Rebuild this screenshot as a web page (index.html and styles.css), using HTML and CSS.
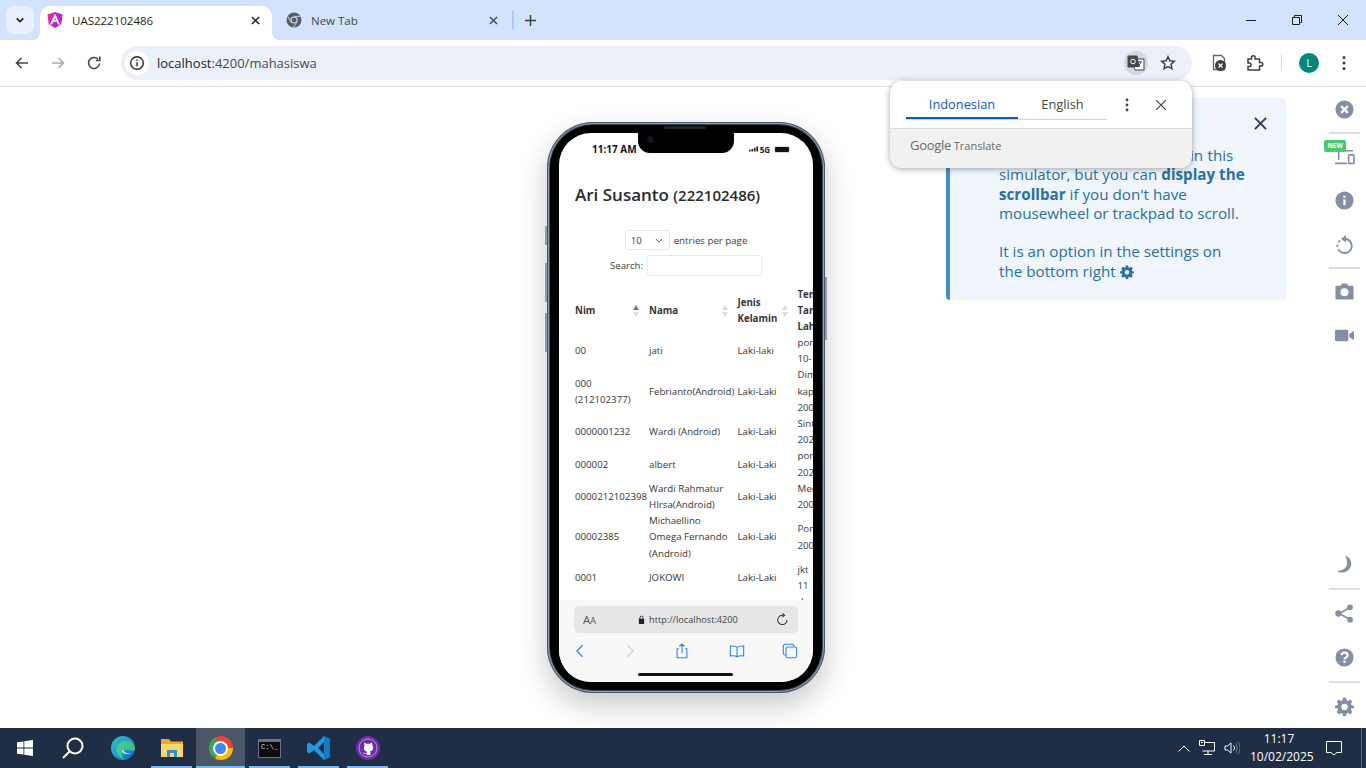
FILE: index.html
```html
<!DOCTYPE html>
<html lang="en">

<head>
    <meta charset="UTF-8">
    <title>UAS222102486</title>
    <link rel="stylesheet" href="styles.css">
</head>

<body>
    <!-- tab strip -->
    <div class="tabstrip">
        <div class="tab-search">
            <svg class="ico12" viewBox="0 0 12 12" fill="none" stroke="#1f1f1f" stroke-width="2"><path d="M2 4l4 4 4-4"/></svg>
        </div>
        <div class="tab tab-active">
            <svg class="favicon" viewBox="0 0 16 16">
                <defs><linearGradient id="ng" x1="0" y1="0" x2="1" y2="0.4"><stop offset="0" stop-color="#ff2a7a"/><stop offset="1" stop-color="#a31ff0"/></linearGradient></defs>
                <path d="M8 0l7.500 2.600-1.200 9.600L8 16l-6.300-3.800L.5 2.600z" fill="url(#ng)"/>
                <path d="M8 1.500L13 12.500h-2L9.800 9.800H6.200L5 12.500H3zM7 8.200h2L8 5.800z" fill="#fff"/>
            </svg>
            <span class="tab-title">UAS222102486</span>
            <svg class="tab-x" viewBox="0 0 10 10" stroke="#1f1f1f" stroke-width="1.600"><path d="M1 1l8 8M9 1l-8 8"/></svg>
        </div>
        <div class="tab tab-idle">
            <svg class="favicon" viewBox="0 0 16 16">
                <circle cx="8" cy="8" r="7.500" fill="#5a5e63"/>
                <circle cx="8" cy="8" r="3.600" fill="#d3e3fd"/>
                <circle cx="8" cy="8" r="2.500" fill="#5a5e63"/>
                <path d="M8 4.400h6.600M5 10L1.800 4.400M10.800 10l-3.200 5.400" stroke="#d3e3fd" stroke-width=".8"/>
            </svg>
            <span class="tab-title tab-title-off">New Tab</span>
            <svg class="tab-x" viewBox="0 0 10 10" stroke="#45474a" stroke-width="1.500"><path d="M1 1l8 8M9 1l-8 8"/></svg>
        </div>
        <div class="tab-sep"></div>
        <svg class="tab-plus" viewBox="0 0 12 12" stroke="#3c4043" stroke-width="1.600"><path d="M6 0v12M0 6h12"/></svg>
        <div class="win-controls">
            <svg class="win-btn" viewBox="0 0 12 12" stroke="#1f1f1f" fill="none"><path d="M1 6.500h10"/></svg>
            <svg class="win-btn" viewBox="0 0 12 12" stroke="#1f1f1f" fill="none"><path d="M1.500 3.500h7v7h-7zM3.500 3.500v-2h7v7h-2"/></svg>
            <svg class="win-btn" viewBox="0 0 12 12" stroke="#1f1f1f" fill="none"><path d="M1 1l10 10M11 1L1 11"/></svg>
        </div>
    </div>

    <!-- toolbar -->
    <div class="toolbar">
        <div class="nav-btns">
            <svg class="ico16" viewBox="0 0 16 16" fill="none" stroke="#474747" stroke-width="1.600"><path d="M14 8H2.500M7.500 3l-5 5 5 5"/></svg>
            <svg class="ico16" viewBox="0 0 16 16" fill="none" stroke="#a9abad" stroke-width="1.600"><path d="M2 8h11.500M8.500 3l5 5-5 5"/></svg>
            <svg class="ico16" viewBox="0 0 16 16" fill="none" stroke="#474747" stroke-width="1.600"><path d="M13.500 8.500A5.500 5.500 0 1 1 12 4.200"/><path d="M13.800 1.500v4h-4"/></svg>
        </div>
        <div class="omnibox">
            <div class="omni-info">
                <svg class="ico16" viewBox="0 0 16 16" fill="none" stroke="#2b2b2b" stroke-width="1.400"><circle cx="8" cy="8" r="6.300"/><path d="M8 7.200v4M8 4.500v1.400"/></svg>
            </div>
            <span class="url"><b>localhost</b>:4200/mahasiswa</span>
            <div class="omni-translate">
                <svg class="ico18" viewBox="0 0 18 18">
                    <path d="M1 2h9l1 3h6v11H8l-1-3H1z" fill="#fff" stroke="#474747"/>
                    <path d="M1 2h9l3 11H1z" fill="#474747"/>
                    <circle cx="6" cy="7.500" r="2.300" fill="none" stroke="#fff" stroke-width="1"/>
                    <path d="M11 8h4M13 7v1M14 8.500l-3 4" stroke="#474747" fill="none"/>
                </svg>
            </div>
            <svg class="omni-star" viewBox="0 0 16 16" fill="none" stroke="#3c4043" stroke-width="1.500"><path d="M8 1.800l1.900 4 4.400.5-3.200 3 .8 4.400L8 11.600l-3.900 2.100.8-4.400-3.200-3 4.400-.5z"/></svg>
        </div>
        <div class="ext-btns">
            <div class="ext-slot">
                <svg class="ico18" viewBox="0 0 18 18">
                    <path d="M3.500 1.500h8l3 3v11h-11z" fill="#fff" stroke="#5f6368" stroke-width="1.300"/>
                    <circle cx="10.500" cy="11.500" r="5.500" fill="#3c4043"/>
                    <path d="M8.500 9.500l4 4M12.500 9.500l-4 4" stroke="#fff" stroke-width="1.200"/>
                </svg>
            </div>
            <div class="ext-slot">
                <svg class="ico18" viewBox="0 0 18 18" fill="none" stroke="#3c4043" stroke-width="1.500"><path d="M2 5h3.500V3.500a1.800 1.800 0 0 1 3.600 0V5h4.400v3.500H15a1.800 1.800 0 0 1 0 3.600h-1.500V16H2v-3.500h1.300a1.800 1.800 0 0 0 0-3.600H2z"/></svg>
            </div>
            <div class="ext-sep"></div>
            <div class="avatar">L</div>
            <svg class="ico-menu" viewBox="0 0 4 16" fill="#3c4043"><circle cx="2" cy="2.500" r="1.500"/><circle cx="2" cy="8" r="1.500"/><circle cx="2" cy="13.500" r="1.500"/></svg>
        </div>
    </div>

    <!-- page -->
    <div class="viewport">
        <div class="sim-canvas">
            <div class="phone">
                <div class="btn-side btn-mute"></div>
                <div class="btn-side btn-vol1"></div>
                <div class="btn-side btn-vol2"></div>
                <div class="btn-side btn-power"></div>
                <div class="phone-bezel">
                    <span class="speaker"></span>
                    <div class="screen">
                        <div class="notch"><span class="camera"></span></div>
                        <div class="statusbar">
                            <span class="clock">11:17 AM</span>
                            <span class="status-right">
                                <svg class="signal" viewBox="0 0 11 6" fill="#222"><rect x="0" y="4" width="2" height="2"/><rect x="3" y="3" width="2" height="3"/><rect x="6" y="1.500" width="2" height="4.500"/><rect x="9" y="0" width="2" height="6"/></svg>
                                <span class="net">5G</span>
                                <span class="battery"></span>
                            </span>
                        </div>
                        <div class="page">
                            <h1 class="title">Ari Susanto <small>(222102486)</small></h1>
                            <div class="dt-top">
                                <div class="dt-line">
                                    <div class="dt-select">10
                                        <svg class="dt-caret" viewBox="0 0 10 6" fill="none" stroke="#444" stroke-width="1.100"><path d="M1 1l4 4 4-4"/></svg>
                                    </div>
                                    <span>entries per page</span>
                                </div>
                                <div class="dt-line dt-search">
                                    <span>Search:</span>
                                    <div class="dt-input"></div>
                                </div>
                            </div>
                            <table class="dt">
                                <colgroup>
                                    <col class="c1"><col class="c2"><col class="c3"><col class="c4">
                                </colgroup>
                                <thead>
                                    <tr>
                                        <th><span class="th-in">Nim<span class="sort sort-asc"></span></span></th>
                                        <th><span class="th-in">Nama<span class="sort"></span></span></th>
                                        <th><span class="th-in">Jenis<br>Kelamin<span class="sort"></span></span></th>
                                        <th>Tempat<br>Tanggal<br>Lahir</th>
                                    </tr>
                                </thead>
                                <tbody>
                                    <tr><td>00</td><td>jati</td><td>Laki-laki</td><td>pondok<br>10-10-2000</td></tr>
                                    <tr><td>000<br>(212102377)</td><td>Febrianto(Android)</td><td>Laki-Laki</td><td>Dimana<br>kapan<br>2000</td></tr>
                                    <tr><td>0000001232</td><td>Wardi (Android)</td><td>Laki-Laki</td><td>Sintang<br>2024</td></tr>
                                    <tr><td>000002</td><td>albert</td><td>Laki-Laki</td><td>pontianak<br>2024</td></tr>
                                    <tr><td>0000212102398</td><td>Wardi Rahmatur<br>HIrsa(Android)</td><td>Laki-Laki</td><td>Medan<br>2002</td></tr>
                                    <tr><td>00002385</td><td>Michaellino<br>Omega Fernando<br>(Android)</td><td>Laki-Laki</td><td>Pontianak<br>2003</td></tr>
                                    <tr class="row-top"><td>0001</td><td>JOKOWI</td><td>Laki-Laki</td><td>jkt<br>11<br>desember</td></tr>
                                </tbody>
                            </table>
                        </div>
                        <div class="safari">
                            <div class="addr">
                                <span class="addr-aa">A<small>A</small></span>
                                <span class="addr-url">
                                    <svg class="addr-lock" viewBox="0 0 8 10" fill="#222"><path d="M1 4.200h6V10H1z"/><path d="M2.200 4.500V3a1.800 1.800 0 0 1 3.600 0v1.500" fill="none" stroke="#222"/></svg>
                                    http://localhost:4200
                                </span>
                                <svg class="addr-reload" viewBox="0 0 14 14" fill="none" stroke="#333" stroke-width="1.100"><path d="M11.800 7.500A5 5 0 1 1 7 2.500h2"/><path d="M7 .5l2.200 2L7 4.500"/></svg>
                            </div>
                            <div class="safari-nav">
                                <svg class="snav" viewBox="0 0 18 18" fill="none" stroke="#2a84f0" stroke-width="1.300"><path d="M12 2.500L5.500 9l6.500 6.500"/></svg>
                                <svg class="snav" viewBox="0 0 18 18" fill="none" stroke="#d0d0d0" stroke-width="1.300"><path d="M6 2.500L12.500 9 6 15.500"/></svg>
                                <svg class="snav" viewBox="0 0 18 18" fill="none" stroke="#2a84f0" stroke-width="1.200"><path d="M5.500 6.500H3.500v10h11v-10h-2M9 11.500V1M6 3.800L9 1l3 2.800"/></svg>
                                <svg class="snav" viewBox="0 0 18 18" fill="none" stroke="#2a84f0" stroke-width="1.200"><path d="M9 5C7.500 3.500 4 3.200 1.500 3.500v11c2.500-.3 6 0 7.500 1 1.500-1 5-1.300 7.500-1v-11C14 3.200 10.500 3.500 9 5zM9 5v10.500"/></svg>
                                <svg class="snav" viewBox="0 0 18 18" fill="none" stroke="#2a84f0" stroke-width="1.200"><rect x="4.500" y="4.500" width="12" height="12" rx="2"/><path d="M4 13.500h-.5a2 2 0 0 1-2-2V3.500a2 2 0 0 1 2-2h8a2 2 0 0 1 2 2V4"/></svg>
                            </div>
                            <div class="home-bar"></div>
                        </div>
                    </div>
                </div>
            </div>
        </div>

        <div class="notice">
            <svg class="notice-x" viewBox="0 0 14 14" stroke="#2b3a52" stroke-width="2"><path d="M1 1l12 12M13 1L1 13"/></svg>
            <p class="notice-text"><span class="notice-first">The scrollbars stay hidden in this</span><br>simulator, but you can <b>display the<br>scrollbar</b> if you don't have<br>mousewheel or trackpad to scroll.</p>
            <p class="notice-text">It is an option in the settings on<br>the bottom right
                <svg class="notice-gear" viewBox="0 0 24 24" fill="#296fa8"><path fill-rule="evenodd" d="M10 1h4l.6 3.100 1.900.8L19.100 3 22 6l-1.900 2.600.8 1.900L24 11v3l-3.100.6-.8 1.900L22 19l-3 3-2.500-1.900-1.900.8L14 24h-4l-.6-3.100-1.900-.8L5 22l-3-3 1.900-2.500-.8-1.900L0 14v-3l3.100-.6.8-1.900L2 6l3-3 2.500 1.900 1.900-.8zM12 8.500a4 4 0 1 0 0 8 4 4 0 0 0 0-8z"/></svg>
            </p>
        </div>

        <div class="translate-pop">
            <div class="tp-top">
                <div class="tp-tabs">
                    <span class="tp-tab tp-tab-on">Indonesian</span>
                    <span class="tp-tab">English</span>
                </div>
                <svg class="tp-dots" viewBox="0 0 4 14" fill="#474747"><circle cx="2" cy="2" r="1.400"/><circle cx="2" cy="7" r="1.400"/><circle cx="2" cy="12" r="1.400"/></svg>
                <svg class="tp-x" viewBox="0 0 10 10" stroke="#474747" stroke-width="1.200"><path d="M0 0l10 10M10 0L0 10"/></svg>
            </div>
            <div class="tp-foot"><span class="tp-google">Google</span> Translate</div>
        </div>

        <div class="sidebar">
            <div class="side-btn">
                <svg class="side-ico" viewBox="0 0 20 20"><circle cx="10" cy="10" r="9.500" fill="#858fa3"/><path d="M6.500 6.500l7 7M13.500 6.500l-7 7" stroke="#fff" stroke-width="2.400"/></svg>
            </div>
            <div class="side-hr"></div>
            <div class="side-btn">
                <span class="badge-new">NEW</span>
                <svg class="side-ico-dev" viewBox="0 0 24 20" fill="none" stroke="#858fa3" stroke-width="1.800"><path d="M5 12V2h16M1 16h13"/><rect x="16" y="6.500" width="6" height="9.500" rx=".8"/></svg>
            </div>
            <div class="side-btn">
                <svg class="side-ico" viewBox="0 0 20 20"><circle cx="10" cy="10" r="9.500" fill="#858fa3"/><path d="M10 9v6M10 5v2" stroke="#fff" stroke-width="2.400"/></svg>
            </div>
            <div class="side-btn">
                <svg class="side-ico" viewBox="0 0 20 20" fill="none" stroke="#858fa3" stroke-width="2"><path d="M10 4A7.500 7.500 0 1 1 5 17"/><path d="M5 17A7.500 7.500 0 0 1 10 4" stroke-dasharray="2.500 2.500"/><path d="M11.500 0L6.500 4l5 4z" fill="#858fa3" stroke="none"/></svg>
            </div>
            <div class="side-hr"></div>
            <div class="side-btn">
                <svg class="side-ico" viewBox="0 0 20 20"><path fill-rule="evenodd" d="M1.500 4H6l1.500-2.500h5L14 4h4.500a1 1 0 0 1 1 1v12.500a1 1 0 0 1-1 1h-17a1 1 0 0 1-1-1V5a1 1 0 0 1 1-1zM10 6.500a4.200 4.200 0 1 0 0 8.400 4.200 4.200 0 0 0 0-8.400z" fill="#858fa3"/></svg>
            </div>
            <div class="side-btn">
                <svg class="side-ico" viewBox="0 0 20 20" fill="#858fa3"><rect x="0" y="4" width="14" height="12" rx="1.500"/><path d="M15 8.500l5-3.500v10l-5-3.500z"/></svg>
            </div>
            <div class="side-spacer"></div>
            <div class="side-btn">
                <svg class="side-ico" viewBox="0 0 20 20" fill="#858fa3"><path d="M10.500 0.500c4.500 1.500 7 5 6.500 9.500-.5 5-5 8.500-9.500 8.500-2.300 0-4.300-.8-5.500-2 5 .5 9.500-2 10.500-6 .7-3.500-.3-7.500-2-10z"/></svg>
            </div>
            <div class="side-hr side-hr-wide"></div>
            <div class="side-btn">
                <svg class="side-ico" viewBox="0 0 20 20"><path d="M15.500 4L4.500 10l11 6" fill="none" stroke="#858fa3" stroke-width="1.800"/><circle cx="15.800" cy="3.500" r="3" fill="#858fa3"/><circle cx="3.500" cy="10" r="3.300" fill="#858fa3"/><circle cx="15.800" cy="16.500" r="3" fill="#858fa3"/></svg>
            </div>
            <div class="side-btn">
                <svg class="side-ico" viewBox="0 0 20 20"><circle cx="10" cy="10" r="9.500" fill="#858fa3"/><path d="M6.800 7.500C7 5.500 8.500 4.700 10 4.700c2 0 3.300 1.200 3.300 2.800 0 2.400-3.300 2.400-3.300 4.600" fill="none" stroke="#fff" stroke-width="2.200"/><path d="M10 13.300v2.300" stroke="#fff" stroke-width="2.400"/></svg>
            </div>
            <div class="side-hr side-hr-last"></div>
            <div class="side-btn">
                <svg class="side-ico" viewBox="0 0 24 24" fill="#858fa3"><path fill-rule="evenodd" d="M10 1h4l.6 3.100 1.900.8L19.100 3 22 6l-1.900 2.600.8 1.900L24 11v3l-3.100.6-.8 1.900L22 19l-3 3-2.500-1.900-1.900.8L14 24h-4l-.6-3.100-1.900-.8L5 22l-3-3 1.900-2.500-.8-1.900L0 14v-3l3.100-.6.8-1.900L2 6l3-3 2.500 1.900 1.900-.8zM12 8.500a4 4 0 1 0 0 8 4 4 0 0 0 0-8z"/></svg>
            </div>
        </div>
    </div>

    <!-- taskbar -->
    <div class="taskbar">
        <div class="task-item">
            <svg class="ico16" viewBox="0 0 16 16" fill="#fff"><path d="M0 2.300l6.500-.9v6.200H0zM7.300 1.300L16 0v7.600H7.300zM0 8.400h6.500v6.200L0 13.700zM7.300 8.400H16V16l-8.700-1.200z"/></svg>
        </div>
        <div class="task-item">
            <svg class="task-ico task-ico-search" viewBox="0 0 24 24" fill="none" stroke="#fff" stroke-width="2"><circle cx="14" cy="10" r="7.500"/><path d="M8.500 15.500L2 22"/></svg>
        </div>
        <div class="task-item">
            <svg class="task-ico" viewBox="0 0 24 24">
                <defs><linearGradient id="eg" x1="0" y1="0" x2="1" y2="1"><stop offset="0" stop-color="#36c6a0"/><stop offset=".5" stop-color="#1b9de2"/><stop offset="1" stop-color="#0c59a4"/></linearGradient></defs>
                <circle cx="12" cy="12" r="12" fill="url(#eg)"/>
                <path d="M24 13c0-5-4-8-9-8-6 0-9.500 4-9.500 9 0 5 4 9 8 10-2-1.500-3-4-2-7 1-3 4-4 6.500-3 2 .8 3.500 2 6 0z" fill="#58d668" opacity=".7"/>
                <path d="M11 14c0 2.500 2 4 5 4 1.500 0 3-.5 4-1-1 .2-5 .5-6.500-1-1-1-1-2.500-2.500-2z" fill="#fff" opacity=".8"/>
            </svg>
        </div>
        <div class="task-item task-open">
            <svg class="task-ico" viewBox="0 0 24 24"><path d="M1 3h8l2 2.500h12V21H1z" fill="#e8a92d"/><path d="M1 8h22v13H1z" fill="#fbd66b"/><path d="M7 21v-7h10v7h-3v-4h-4v4z" fill="#2d8fd5"/></svg>
        </div>
        <div class="task-item task-open task-active">
            <span class="chrome-ico"></span>
        </div>
        <div class="task-item task-open">
            <div class="cmd-ico">C:\_</div>
        </div>
        <div class="task-item task-open">
            <svg class="task-ico" viewBox="0 0 24 24"><path d="M17 0l6 3v18l-6 3L7 14l-4.500 3.500L0 16v-8l2.500-1.500L7 10z" fill="#1f9ae0"/><path d="M17 6l-6 6 6 6z" fill="#1f2d45"/><path d="M17 0l6 3v18l-6 3z" fill="#0f7cc4"/></svg>
        </div>
        <div class="task-item task-open">
            <svg class="task-ico" viewBox="0 0 24 24"><circle cx="12" cy="12" r="12" fill="#6f2da8"/><circle cx="12" cy="12" r="9" fill="none" stroke="#c9a6e6" stroke-width=".8"/><path d="M8 6.500l2.200 1.200h3.600L16 6.500l.4 3c.8 1 .8 2.200.6 3.200-.4 1.800-2 2.500-3.200 2.700.5.400.7 1 .7 1.600V19h-3.900v-1c-1.600.4-3-.2-3.600-1.800.8.300 1.300.9 2 1.200.6.100 1.200 0 1.600 0 0-.6.200-1.200.7-1.600-1.400-.2-2.900-1-3.300-2.700-.2-1-.2-2.200.6-3.200z" fill="#fff"/></svg>
        </div>
        <div class="tray">
            <svg class="tray-chev" viewBox="0 0 12 7" fill="none" stroke="#fff" stroke-width="1"><path d="M.5 6.500L6 1l5.500 5.500"/></svg>
            <svg class="tray-net" viewBox="0 0 16 16" fill="none" stroke="#fff"><path d="M3.500 2.500h12v8.500h-12M9 11v3M5 14.500h8"/><path d="M.5.500h5v5h-5z" fill="#1f2d45"/><path d="M2 2.500h2"/></svg>
            <svg class="tray-vol" viewBox="0 0 16 16" fill="none" stroke="#fff"><path d="M1 6h2.500L7 3v10l-3.500-3H1z"/><path d="M9.500 5.500a3.500 3.500 0 0 1 0 5"/><path d="M11.500 3.500a6.500 6.500 0 0 1 0 9M13.500 1.500a9 9 0 0 1 0 13" stroke="#7b8494"/></svg>
            <div class="tray-clock">11:17<br>10/02/2025</div>
            <svg class="tray-note" viewBox="0 0 16 16" fill="none" stroke="#fff"><path d="M.5 1.500h15v11h-4.500l-3 2.500-3-2.500H.5z"/></svg>
            <div class="tray-edge"></div>
        </div>
    </div>
</body>

</html>
```

FILE: styles.css
```css
* {
    box-sizing: border-box;
}

html,
body {
    margin: 0;
    height: 768px;
    overflow: hidden;
}

body {
    display: flex;
    flex-direction: column;
    width: 1366px;
    font-family: "Open Sans", "Noto Sans", sans-serif;
    background: #fff;
}

svg {
    display: block;
    flex: none;
}

.ico12 { width: 10px; height: 10px; }
.ico16 { width: 16px; height: 16px; }
.ico18 { width: 18px; height: 18px; }

/* tab strip */
.tabstrip {
    display: flex;
    align-items: flex-start;
    height: 40px;
    background: #d3e3fd;
    flex: none;
}

.tab-search {
    display: flex;
    align-items: center;
    justify-content: center;
    width: 28px;
    height: 28px;
    margin: 6px 6px 0;
    background: #e8f0fe;
    border-radius: 8px;
}

.tab {
    display: flex;
    align-items: center;
    width: 232px;
    height: 34px;
    margin-top: 6px;
    padding: 0 10px 6px 6px;
    border-radius: 10px 10px 0 0;
}

.tab-active {
    position: relative;
    padding-left: 5px;
    padding-right: 10px;
    background: #fff;
}

.tab-active::before,
.tab-active::after {
    content: "";
    position: absolute;
    bottom: 0;
    width: 8px;
    height: 8px;
}

.tab-active::before {
    left: -8px;
    background: radial-gradient(circle at 0 0, transparent 8px, #fff 8px);
}

.tab-active::after {
    right: -8px;
    background: radial-gradient(circle at 100% 0, transparent 8px, #fff 8px);
}

.tab-idle {
    padding: 0 4px 6px 12px;
}

.favicon {
    width: 16px;
    height: 16px;
    margin-right: 9px;
    margin-left: 2px;
}

.tab-title {
    flex: 1;
    font-size: 11.500px;
    color: #1f1f1f;
}

.tab-title-off {
    color: #45474a;
}

.tab-x {
    width: 9px;
    height: 9px;
    margin-right: 2px;
}

.tab-sep {
    width: 2px;
    height: 18px;
    margin: 11px 0 0 8px;
    background: #a8c7fa;
}

.tab-plus {
    width: 11px;
    height: 11px;
    margin: 15px 0 0 11px;
}

.win-controls {
    display: flex;
    align-items: center;
    margin: 14px 0 0 auto;
}

.win-btn {
    width: 46px;
    height: 12px;
}

/* toolbar */
.toolbar {
    display: flex;
    align-items: center;
    height: 47px;
    flex: none;
    background: #fff;
    border-bottom: 1px solid #dfe1e5;
    border-radius: 10px 10px 0 0;
    padding-bottom: 1px;
}

.nav-btns {
    display: flex;
    gap: 20px;
    margin-left: 14px;
    margin-right: 19px;
}

.omnibox {
    display: flex;
    align-items: center;
    width: 1071px;
    height: 34px;
    background: #ecf0f8;
    border-radius: 17px;
}

.omni-info {
    display: flex;
    align-items: center;
    justify-content: center;
    width: 24px;
    height: 24px;
    margin-left: 4px;
    background: #fff;
    border-radius: 50%;
}

.url {
    flex: 1;
    margin-left: 8px;
    font-size: 13px;
    color: #474a4f;
}

.url b {
    font-weight: 400;
    color: #1f1f1f;
}

.omni-translate {
    display: flex;
    align-items: center;
    justify-content: center;
    width: 24px;
    height: 24px;
    background: #d3d7de;
    border-radius: 50%;
}

.omni-star {
    width: 16px;
    height: 16px;
    margin-left: 12px;
    margin-right: 16px;
}

.ext-btns {
    display: flex;
    align-items: center;
}

.ext-slot {
    display: flex;
    justify-content: center;
    width: 36px;
}

.ext-slot:first-child {
    margin-left: 9px;
}

.ext-sep {
    width: 1px;
    height: 16px;
    margin-left: 8px;
    background: #c7d6f0;
}

.avatar {
    width: 20px;
    height: 20px;
    margin-left: 17px;
    border-radius: 50%;
    background: #00897b;
    color: #fff;
    font-size: 11px;
    line-height: 20px;
    text-align: center;
}

.ico-menu {
    width: 4px;
    height: 16px;
    margin-left: 23px;
}

/* page area */
.viewport {
    position: relative;
    display: flex;
    flex: 1;
    min-height: 0;
}

.sim-canvas {
    flex: 1;
    padding: 35px 0 0 547px;
}

.phone {
    position: relative;
    width: 278px;
    height: 571px;
    padding: 3px;
    border-radius: 46px;
    background: #8f9db3;
    box-shadow: inset 0 0 0 1px #4a5568, 0 12px 30px rgba(0, 0, 0, 0.22);
}

.btn-side {
    position: absolute;
    width: 2px;
    background: #8d9bb3;
}

.btn-mute { left: -2px; top: 104px; height: 19px; }
.btn-vol1 { left: -2px; top: 141px; height: 39px; }
.btn-vol2 { left: -2px; top: 191px; height: 39px; }
.btn-power { right: -2px; top: 155px; height: 63px; }

.phone-bezel {
    position: relative;
    height: 100%;
    padding: 8px 9px;
    border-radius: 43px;
    background: #000;
    box-shadow: 0 0 0 1px #3f4754;
}

.speaker {
    position: absolute;
    top: 1px;
    left: 114px;
    width: 42px;
    height: 3px;
    background: #222;
    border-radius: 2px;
}

.screen {
    position: relative;
    display: flex;
    flex-direction: column;
    height: 100%;
    border-radius: 32px;
    overflow: hidden;
    background: #fff;
}

.notch {
    position: absolute;
    top: 0;
    left: 79px;
    width: 96px;
    height: 20px;
    background: #000;
    border-radius: 0 0 12px 12px;
}

.camera {
    position: absolute;
    top: 3px;
    left: 9px;
    width: 7px;
    height: 7px;
    border-radius: 50%;
    background: #0e1626;
}

.statusbar {
    display: flex;
    align-items: center;
    justify-content: space-between;
    flex: none;
    height: 32px;
    padding: 0 23px 0 33px;
}

.clock {
    font-size: 10px;
    font-weight: 700;
    color: #111;
}

.status-right {
    display: flex;
    align-items: center;
    gap: 2px;
}

.signal {
    width: 9px;
    height: 6px;
}

.net {
    font-size: 8px;
    font-weight: 700;
    color: #222;
}

.battery {
    width: 16px;
    height: 7px;
    margin-left: 2px;
    background: #111;
    border-radius: 2px;
    border: 1px solid #ddd;
}

.page {
    flex: 1;
    min-height: 0;
    overflow: hidden;
    padding: 0 0 0 16px;
    color: #363636;
}

.title {
    margin: 18px 0 0;
    font-size: 17px;
    font-weight: 600;
    line-height: 24px;
    color: #2b2b2b;
}

.title small {
    font-size: 15px;
    font-weight: 600;
}

.dt-top {
    margin-top: 23px;
    margin-left: -16px;
    font-size: 9.700px;
    color: #404040;
}

.dt-line {
    display: flex;
    align-items: center;
    justify-content: center;
    gap: 4px;
    height: 20px;
}

.dt-search {
    height: 21px;
    margin-top: 5px;
}

.dt-select {
    display: flex;
    align-items: center;
    justify-content: space-between;
    width: 45px;
    height: 20px;
    padding: 0 6px 0 5px;
    border: 1px solid #e6e6e6;
    border-radius: 3px;
}

.dt-caret {
    width: 8px;
    height: 5px;
}

.dt-input {
    width: 115px;
    height: 21px;
    border: 1px solid #eaeaea;
    border-radius: 3px;
}

.dt {
    width: 300px;
    margin-top: 11px;
    table-layout: fixed;
    border-collapse: collapse;
    font-size: 9.700px;
    line-height: 16.200px;
}

.c1 { width: 74px; }
.c2 { width: 88.500px; }
.c3 { width: 60px; }
.c4 { width: 78px; }

.dt th,
.dt td {
    padding: 0;
    text-align: left;
    white-space: nowrap;
}

.dt th {
    font-weight: 700;
    color: #363636;
    line-height: 16px;
}

.row-top td {
    vertical-align: top;
    padding-top: 8px;
}

.dt .row-top td {
    padding-top: 8px;
}

.dt .row-top td:last-child {
    padding-top: 0;
}

.th-in {
    position: relative;
    display: block;
}

.sort {
    position: absolute;
    top: 50%;
    right: 10px;
    width: 6px;
    height: 12px;
    margin-top: -6px;
}

.sort::before,
.sort::after {
    content: "";
    position: absolute;
    left: 0;
    border-left: 3px solid transparent;
    border-right: 3px solid transparent;
}

.sort::before {
    top: 0;
    border-bottom: 5px solid #dcdcdc;
}

.sort::after {
    bottom: 0;
    border-top: 5px solid #dcdcdc;
}

.sort-asc::before {
    border-bottom-color: #777;
}

.safari {
    position: relative;
    flex: none;
    height: 82px;
    background: #f8f8f8;
    padding: 6px 15px 0;
}

.addr {
    display: flex;
    align-items: center;
    height: 27px;
    padding: 0 9px;
    background: #e6e6e6;
    border-radius: 5px;
}

.addr-aa {
    width: 46px;
    font-size: 11.500px;
    color: #555;
}

.addr-aa small {
    font-size: 9px;
}

.addr-url {
    display: flex;
    align-items: center;
    gap: 3px;
    flex: 1;
    padding-left: 9px;
    font-size: 9.200px;
    color: #444;
}

.addr-lock {
    width: 7px;
    height: 9px;
    margin-right: 1px;
}

.addr-reload {
    width: 13px;
    height: 13px;
}

.safari-nav {
    display: flex;
    margin: 10px 0 0 -2px;
}

.snav {
    width: 16px;
    height: 16px;
}

.snav:nth-child(2) { margin-left: 34px; }
.snav:nth-child(3) { margin-left: 36px; }
.snav:nth-child(4) { margin-left: 39px; }
.snav:nth-child(5) { margin-left: 37px; }

.home-bar {
    position: absolute;
    left: 79px;
    bottom: 6px;
    width: 95px;
    height: 3px;
    border-radius: 2px;
    background: #111;
}

/* notice */
.notice {
    position: absolute;
    top: 11px;
    left: 946px;
    width: 340px;
    height: 202px;
    padding: 48px 20px 0 49px;
    background: #eff5fb;
    border-left: 4px solid #3e8ed0;
    border-radius: 4px;
    color: #296fa8;
}

.notice-text {
    margin: 0 0 19.300px;
    font-size: 15.200px;
    line-height: 19.300px;
    white-space: nowrap;
}

.notice-first {
    word-spacing: 0.500px;
}

.notice-gear {
    display: inline-block;
    width: 14px;
    height: 14px;
    vertical-align: -2px;
}

.notice-x {
    position: absolute;
    top: 19px;
    right: 19px;
    width: 13px;
    height: 13px;
}

/* translate bubble */
.translate-pop {
    position: absolute;
    top: -6px;
    left: 890px;
    width: 302px;
    height: 87px;
    background: #fff;
    border-radius: 12px;
    overflow: hidden;
    box-shadow: 0 1px 6px rgba(0, 0, 0, 0.35);
}

.tp-top {
    display: flex;
    align-items: flex-start;
    height: 47px;
    padding: 11px 0 0 16px;
}

.tp-tabs {
    display: flex;
    width: 201px;
    border-bottom: 1px solid #d4d4d4;
}

.tp-tab {
    width: 89px;
    height: 27px;
    font-size: 12.800px;
    font-weight: 500;
    line-height: 24px;
    text-align: center;
    color: #444746;
}

.tp-tab-on {
    width: 112px;
    color: #0b57d0;
    border-bottom: 2px solid #0b57d0;
}

.tp-dots {
    width: 4px;
    height: 14px;
    margin: 6px 0 0 18px;
}

.tp-x {
    width: 10px;
    height: 10px;
    margin: 8px 0 0 27px;
}

.tp-foot {
    height: 40px;
    padding: 7px 0 0 20px;
    background: #f1f1f1;
    border-top: 1px solid #dadce0;
    font-size: 11px;
    color: #6a6a6a;
}

.tp-google {
    font-size: 13px;
    letter-spacing: -0.3px;
}

/* simulator side bar */
.sidebar {
    display: flex;
    flex-direction: column;
    align-items: center;
    flex: none;
    width: 44px;
}

.side-btn {
    position: relative;
    display: flex;
    align-items: center;
    justify-content: center;
    height: 44px;
    flex: none;
}

.side-ico {
    width: 19px;
    height: 19px;
}

.side-ico-dev {
    width: 22px;
    height: 18px;
    margin: 4px 0 0 2px;
}

.badge-new {
    position: absolute;
    top: 6px;
    left: -8px;
    padding: 0 3.500px;
    background: #48c774;
    border-radius: 2px;
    color: #fff;
    font-size: 6.500px;
    font-weight: 700;
    line-height: 12px;
}

.side-hr {
    flex: none;
    width: 31px;
    height: 2px;
    margin: 1px 0 0;
    background: #dcdee3;
}

.side-hr-wide,
.side-hr-last {
    margin: 2px 0 1px;
}

.side-spacer {
    flex: 1;
}

/* taskbar */
.taskbar {
    display: flex;
    align-items: center;
    flex: none;
    height: 40px;
    background: #1f2d45;
}

.task-item {
    position: relative;
    display: flex;
    align-items: center;
    justify-content: center;
    width: 49px;
    height: 40px;
}

.task-open::after {
    content: "";
    position: absolute;
    left: 4px;
    right: 4px;
    bottom: 0;
    height: 2px;
    background: #76b9ed;
}

.task-active {
    background: #4b5669;
}

.task-active::after {
    left: 0;
    right: 0;
}

.task-ico {
    width: 24px;
    height: 24px;
}

.task-ico-search {
    margin-right: 2px;
}

.chrome-ico {
    position: relative;
    width: 24px;
    height: 24px;
    border-radius: 50%;
    background: conic-gradient(#ea4335 0 90deg, #fbbc04 90deg 210deg, #34a853 210deg 330deg, #ea4335 330deg);
}

.chrome-ico::after {
    content: "";
    position: absolute;
    inset: 6.500px;
    border-radius: 50%;
    background: #4285f4;
    box-shadow: 0 0 0 2px #fff;
}

.cmd-ico {
    width: 23px;
    height: 19px;
    padding: 2px 0 0 2px;
    background: #0c0c0c;
    border: 1px solid #6b7280;
    border-top-width: 3px;
    color: #ddd;
    font-family: "Liberation Mono", monospace;
    font-size: 7px;
    line-height: 7px;
}

.tray {
    display: flex;
    align-items: center;
    margin-left: auto;
    height: 40px;
    color: #fff;
}

.tray-chev {
    width: 12px;
    height: 7px;
}

.tray-net {
    width: 16px;
    height: 16px;
    margin-left: 9px;
}

.tray-vol {
    width: 16px;
    height: 16px;
    margin-left: 9px;
}

.tray-clock {
    width: 58px;
    margin-left: 10px;
    font-size: 12px;
    line-height: 18px;
    text-align: center;
}

.tray-note {
    width: 16px;
    height: 16px;
    margin-left: 18px;
}

.tray-edge {
    width: 1px;
    height: 40px;
    margin-left: 19px;
    margin-right: 4px;
    background: #56627a;
}
```
